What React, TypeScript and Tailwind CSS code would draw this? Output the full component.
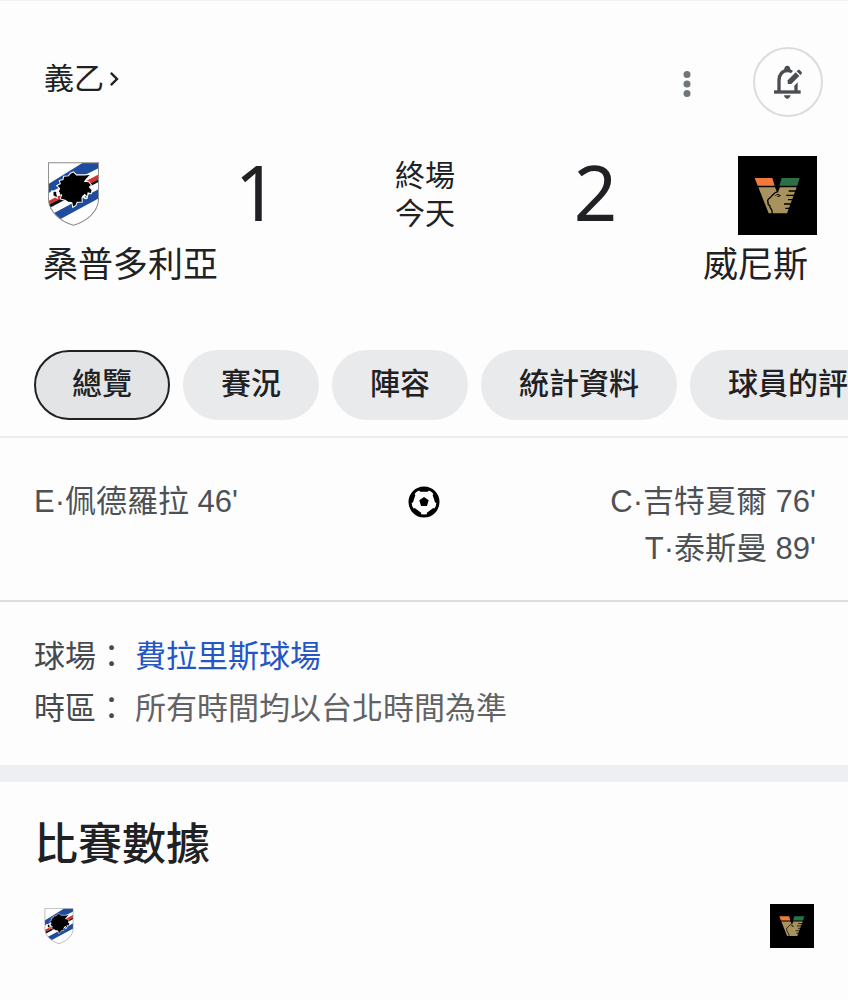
import React, { useState } from 'react';
import { MdChevronRight } from 'react-icons/md';

interface LogoProps {
  className?: string;
}

const tabs = ['總覽', '賽況', '陣容', '統計資料', '球員的評分'];

const homeGoals = ["E·佩德羅拉 46'"];
const awayGoals = ["C·吉特夏爾 76'", "T·泰斯曼 89'"];

const SampdoriaCrest: React.FC<LogoProps> = ({ className }) => (
  <svg viewBox="0 0 150 189" className={className} role="img" aria-label="桑普多利亞">
    <clipPath id="shield">
      <path d="M1 2H149V108C149 148 112 176 75 187C38 176 1 148 1 108Z" />
    </clipPath>
    <g clipPath="url(#shield)">
      <rect width="150" height="189" fill="#fff" />
      <path d="M0 66L106 0H150V18L0 92Z" fill="#1f4c9f" />
      <path d="M0 116L150 36V50L0 127Z" fill="#d8302f" />
      <path d="M0 127L150 50V58L0 138Z" fill="#111" />
      <path d="M0 160L150 80V107L30 172L0 189Z" fill="#1f4c9f" />
      <path
        d="M46 42L60 41L66 33L75 29L84 38L108 38L127 36L114 50L108 57L120 58L128 68L122 74L130 82L127 94L118 91L116 104L108 96L100 106L101 118L86 119L82 128L73 134L70 120L58 118L50 113L36 109L40 97L27 99L27 107L18 101L12 99V88L20 86L30 88L34 78L25 70L36 64L33 55L44 52Z"
        fill="#000"
        stroke="#fff"
        strokeWidth="3"
      />
      <path d="M8 84H16V100H8ZM24 86L35 90V99L24 97Z" fill="#fff" />
      <path d="M103 99C105 106 110 110 116 106" fill="none" stroke="#fff" strokeWidth="5" />
    </g>
    <path
      d="M1 2H149V108C149 148 112 176 75 187C38 176 1 148 1 108Z"
      fill="none"
      stroke="#8c8c8c"
      strokeWidth="3"
    />
  </svg>
);

const VeneziaLogo: React.FC<LogoProps> = ({ className }) => (
  <svg viewBox="0 0 237 237" className={className} role="img" aria-label="威尼斯">
    <rect width="237" height="237" fill="#000" />
    <path d="M50 66H103L110 89H59Z" fill="#f2793a" />
    <path d="M131 66H185L178 89H124Z" fill="#2c7047" />
    <path d="M61 94H111L116 106L120 107L126 94H176L147 172H92Z" fill="#a8935f" />
    <path
      d="M121 107C112 107 108 112 103 118C99 124 90 128 89 133C88 137 92 139 90 143C89 148 98 147 96 152C94 157 104 160 102 166L103 174"
      fill="none"
      stroke="#000"
      strokeWidth="4"
    />
    <path d="M112 119C117 114 121 115 127 119L118 122" fill="none" stroke="#000" strokeWidth="3" />
    <path
      d="M152 105H180M145 118H175M150 131H171M138 144H167M142 157H160"
      stroke="#000"
      strokeWidth="4"
    />
  </svg>
);

const SoccerBall: React.FC<LogoProps> = ({ className }) => (
  <svg viewBox="0 0 96 96" className={className} role="img" aria-label="進球">
    <circle cx="48" cy="48" r="42" fill="#fff" stroke="#000" strokeWidth="9" />
    <path d="M48 33L62 43L57 60H39L34 43Z" fill="#000" />
    {[0, 72, 144, 216, 288].map((angle) => (
      <path key={angle} d="M30 6H66L60 17H36Z" fill="#000" transform={`rotate(${angle} 48 48)`} />
    ))}
  </svg>
);

const BellEditIcon: React.FC<LogoProps> = ({ className }) => (
  <svg viewBox="0 0 90 102" className={className} fill="none" stroke="currentColor" aria-hidden>
    <path d="M3 81H83" strokeWidth="10" />
    <path d="M18 80V46C18 29 28 17 43 17C48 17 53 18 57 21" strokeWidth="10" />
    <path d="M32 17C35 12 33 2 43 2C52 2 51 11 53 15Z" fill="currentColor" stroke="none" />
    <path d="M64 80V62L74 52V80Z" fill="currentColor" stroke="none" />
    <path d="M33 91H53C51 98 47 101 43 101C38 101 34 98 33 91Z" fill="currentColor" stroke="none" />
    <path d="M44 57V46L68 22L79 33L55 57Z" fill="currentColor" stroke="none" />
    <path d="M71 19L75 15C77 14 79 14 80 15L86 21C87 23 87 24 86 26L82 30Z" fill="currentColor" stroke="none" />
  </svg>
);

const App: React.FC = () => {
  const [activeTab, setActiveTab] = useState(tabs[0]);

  return (
    <main
      lang="zh-Hant"
      className="min-h-screen overflow-hidden border-t border-[#f1f1f1] bg-[#fdfdfd] font-['Liberation_Sans','Noto_Sans_CJK_TC',sans-serif] text-[30px] text-[#202124]"
    >
      <header className="border-b-2 border-[#eeeeef] pb-4">
        <div className="flex items-start justify-between pt-[46px] pr-[25px] pl-11">
          <a href="#league" className="flex items-center leading-[64px]">
            義乙
            <MdChevronRight className="-ml-1 size-7" aria-hidden />
          </a>
          <div className="flex items-center gap-13">
            <button type="button" aria-label="更多選項" className="flex w-7 justify-center pt-1">
              <svg viewBox="0 0 8 28" className="h-7 w-2" fill="#70757a">
                <circle cx="4" cy="4.5" r="3.5" />
                <circle cx="4" cy="14" r="3.5" />
                <circle cx="4" cy="23.5" r="3.5" />
              </svg>
            </button>
            <button
              type="button"
              aria-label="編輯通知"
              className="flex size-[70px] items-center justify-center rounded-full border-2 border-[#dadce0] text-[#4a4d52]"
            >
              <BellEditIcon className="h-[34px] w-[30px]" />
            </button>
          </div>
        </div>

        <div className="mt-[39px] grid grid-cols-5 items-center">
          <SampdoriaCrest className="mb-1 ml-12 h-16 w-[51px]" />
          <p className="pb-2 pl-1 text-center font-['Noto_Sans',sans-serif] text-[76px] leading-[70px]">1</p>
          <p className="pb-0.5 pl-0.5 text-center leading-[38px]">
            終場
            <br />
            今天
          </p>
          <p className="pb-2 pl-1 text-center font-['Noto_Sans',sans-serif] text-[76px] leading-[70px]">2</p>
          <VeneziaLogo className="mr-[31px] size-[79px] justify-self-end" />
        </div>
        <div className="mt-2 flex justify-between pr-10 pl-[43px] text-[35px] leading-[44px]">
          <h2>桑普多利亞</h2>
          <h2>威尼斯</h2>
        </div>

        <nav role="tablist" className="mt-[63px] flex gap-[13px] overflow-x-auto pl-[34px] [scrollbar-width:none]">
          {tabs.map((tab) => (
            <button
              key={tab}
              type="button"
              role="tab"
              aria-selected={tab === activeTab}
              onClick={() => setActiveTab(tab)}
              className={`h-[70px] shrink-0 rounded-full border-2 px-9 pb-1 font-medium ${
                tab === activeTab ? 'border-[#202124] bg-[#e3e4e5]' : 'border-[#e9eaec] bg-[#e9eaec]'
              }`}
            >
              {tab}
            </button>
          ))}
        </nav>
      </header>

      <section className="grid grid-cols-[1fr_auto_1fr] border-b-2 border-[#dcdddd] px-8 pt-10 pb-7 text-[31px] leading-[47px] text-[#4d5156]">
        <ul className="pl-0.5">
          {homeGoals.map((goal) => (
            <li key={goal}>{goal}</li>
          ))}
        </ul>
        <SoccerBall className="mt-2 size-8" />
        <ul className="text-right">
          {awayGoals.map((goal) => (
            <li key={goal}>{goal}</li>
          ))}
        </ul>
      </section>

      <dl className="grid grid-cols-[auto_1fr] gap-x-2 px-[34px] pt-[29px] pb-[30px] text-[31px] leading-[52px]">
        <dt className="text-[#47494c]">球場：</dt>
        <dd>
          <a href="#stadium" className="text-[#2456c4]">
            費拉里斯球場
          </a>
        </dd>
        <dt className="text-[#47494c]">時區：</dt>
        <dd className="text-[#626365]">所有時間均以台北時間為準</dd>
      </dl>

      <section className="border-t-[17px] border-[#eeeff2] pt-[33px]">
        <h2 className="px-[34px] text-[44px] leading-[60px] font-medium">比賽數據</h2>
        <div className="mt-[29px] flex items-center justify-between pr-[34px] pl-11">
          <SampdoriaCrest className="h-9 w-[30px]" />
          <VeneziaLogo className="size-11" />
        </div>
      </section>
    </main>
  );
};

export default App;
